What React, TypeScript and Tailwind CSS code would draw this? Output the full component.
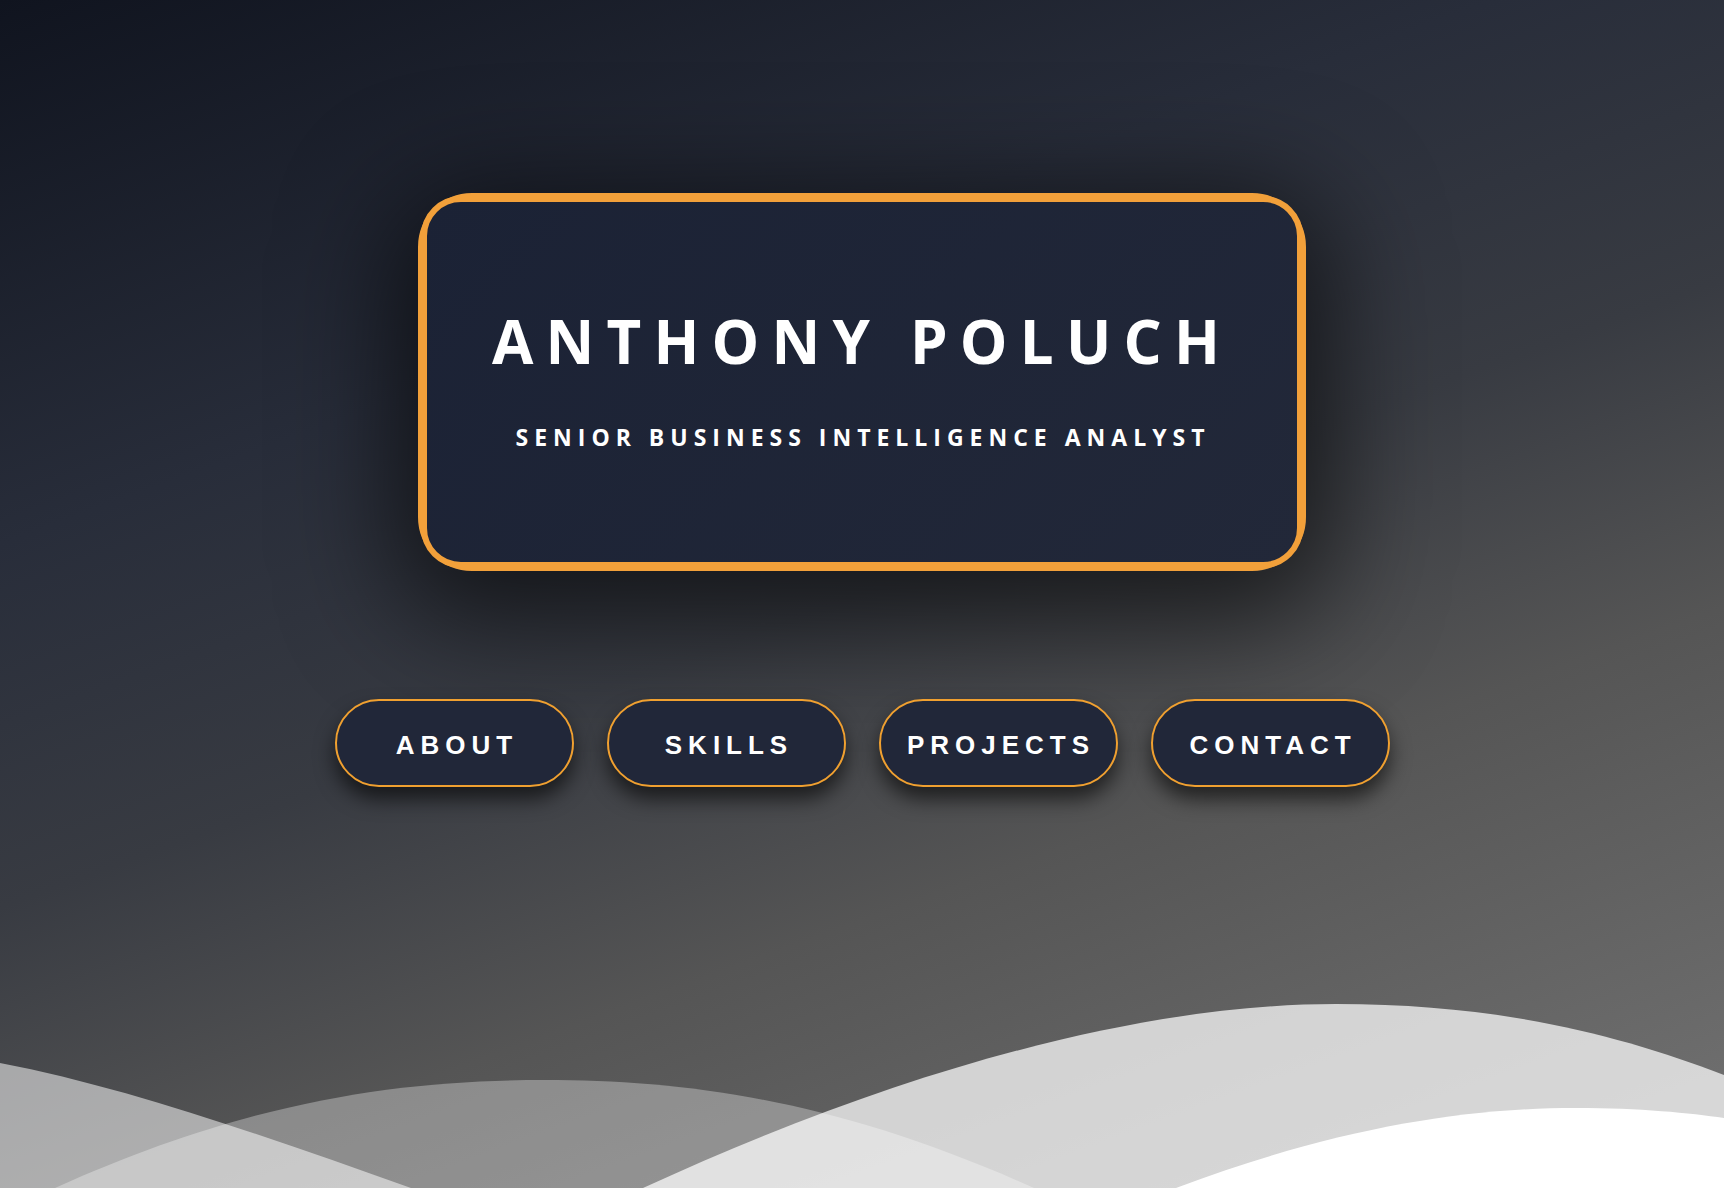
import React from "react";

const Waves = () => (
  <svg
    className="absolute bottom-0 left-0 w-full h-[300px] pointer-events-none"
    viewBox="0 888 1724 300"
    preserveAspectRatio="none"
  >
    <path d="M0,1063 C130,1088 270,1138 411,1188 L411,1200 L0,1200 Z" fill="#ffffff" fillOpacity="0.53" />
    <path d="M55,1188 C250,1100 400,1080 544,1080 C688,1080 838,1100 1034,1188 L1034,1200 L55,1200 Z" fill="#ffffff" fillOpacity="0.32" />
    <path d="M643,1188 C910,1065 1150,1004 1336,1004 C1500,1004 1620,1035 1724,1075 L1724,1200 L643,1200 Z" fill="#ffffff" fillOpacity="0.725" />
    <path d="M1176,1188 C1330,1130 1460,1108 1576,1108 C1640,1108 1690,1113 1724,1118 L1724,1200 L1176,1200 Z" fill="#ffffff" />
  </svg>
);

const NavButton = ({ label }: { label: string }) => (
  <button className="w-[239px] h-[88px] rounded-full border-2 border-[#f0a030] bg-[#212739] text-white font-bold text-[26px] tracking-[6px] pl-[6px] pt-[3px] shadow-[0_12px_20px_rgba(0,0,0,0.6)] flex items-center justify-center [font-family:'Liberation_Sans',Arial,sans-serif] leading-none">
    {label}
  </button>
);

export default function App() {
  return (
    <div className="relative w-full h-[1188px] overflow-hidden bg-[linear-gradient(160deg,#10141f_0%,#282d3a_30%,#383b42_50%,#555555_68%,#737373_100%)]">
      <Waves />
      <div className="relative flex flex-col items-center pt-[193px]">
        <div className="w-[888px] h-[378px] rounded-[54px] border-[3px] border-[#f2a03a] shadow-[0_25px_110px_25px_rgba(0,0,0,0.6)]">
          <div className="h-full rounded-[40px] border-[6px] border-[#f2a03a] bg-[linear-gradient(135deg,#1b2235,#222839)] flex flex-col items-center pt-[109px] [font-family:'Open_Sans','Noto_Sans',sans-serif] text-white">
            <h1 className="text-[60px] leading-none font-bold tracking-[12.2px]">
              ANTHONY POLUCH
            </h1>
            <p className="mt-[55px] text-[23px] leading-none font-bold tracking-[6px] pl-[2px]">
              SENIOR BUSINESS INTELLIGENCE ANALYST
            </p>
          </div>
        </div>
        <nav className="mt-[128px] flex gap-[33px]">
          <NavButton label="ABOUT" />
          <NavButton label="SKILLS" />
          <NavButton label="PROJECTS" />
          <NavButton label="CONTACT" />
        </nav>
      </div>
    </div>
  );
}
